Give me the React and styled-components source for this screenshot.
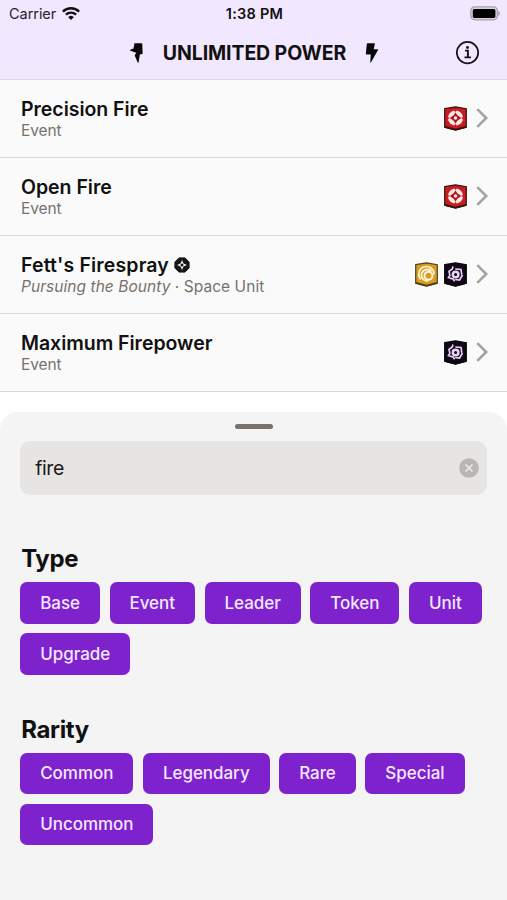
import React from 'react'
import styled, { createGlobalStyle } from 'styled-components'

const GlobalStyle = createGlobalStyle`
  * {
    box-sizing: border-box;
  }
  body {
    margin: 0;
    background: #fff;
    color: #111;
    font-family: Inter, 'Liberation Sans', sans-serif;
  }
`
const Screen = styled.div`
  display: flex;
  flex-direction: column;
  height: 900px;
  overflow: hidden;
`
const Header = styled.header`
  height: 80px;
  background: #f1e7fe;
  border-bottom: 1px solid #dcd7e0;
`
const StatusBar = styled.div`
  display: grid;
  grid-template-columns: 1fr auto 1fr;
  align-items: center;
  height: 27px;
  padding: 0 7px 0 9px;
  font-size: 14.5px;
  line-height: 27px;
`
const Carrier = styled.div`
  display: flex;
  align-items: center;
  gap: 6px;
  color: #28232d;
  letter-spacing: -0.05px;
`
const Time = styled.div`
  font-weight: 600;
  letter-spacing: 0.25px;
`
const Battery = styled.div`
  display: flex;
  justify-content: flex-end;
`
const TitleBar = styled.div`
  display: grid;
  grid-template-columns: 1fr auto 1fr;
  align-items: center;
  height: 51px;
  padding: 0 26px 0 28px;
`
const Brand = styled.div`
  grid-column: 2;
  display: flex;
  align-items: center;
  gap: 19px;
`
const Title = styled.h1`
  margin: 0;
  font-size: 19.5px;
  font-weight: 700;
  line-height: 24px;
  letter-spacing: -0.1px;
`
const InfoButton = styled.button`
  justify-self: end;
  display: flex;
  padding: 0;
  border: 0;
  background: none;
`
const CardRow = styled.div`
  display: flex;
  align-items: center;
  justify-content: space-between;
  height: 78px;
  padding: 0 18px 0 21px;
  background: #fafafa;
  border-bottom: 1px solid #d9d9d9;
`
const CardName = styled.div`
  display: flex;
  align-items: center;
  gap: 5px;
  font-size: 19.5px;
  font-weight: 600;
  line-height: 24px;
  letter-spacing: ${p => p.$spacing || 0}px;
`
const CardInfo = styled.div`
  color: #78716c;
  font-size: 15.5px;
  line-height: 20px;
  letter-spacing: ${p => p.$spacing || 0}px;
`
const Aspects = styled.div`
  display: flex;
  align-items: center;
  gap: 6px;
  padding-bottom: 1px;
`
const Sheet = styled.section`
  flex: 1;
  margin-top: 20px;
  padding: 12px 19.800px 0 20.200px;
  background: #f4f4f4;
  border-radius: 18px 18px 0 0;
`
const Handle = styled.div`
  width: 38px;
  height: 5px;
  margin: 0 auto;
  border-radius: 3px;
  background: #78716c;
`
const SearchBox = styled.div`
  display: flex;
  align-items: center;
  justify-content: space-between;
  height: 54px;
  margin-top: 12px;
  padding: 0 8px 0 15px;
  border-radius: 10px;
  background: #e7e5e4;
  color: #1c1917;
  font-size: 19.5px;
  letter-spacing: -0.4px;
`
const Filter = styled.div`
  padding-top: ${p => p.$top}px;
`
const FilterTitle = styled.h2`
  margin: 0 0 7px 1px;
  font-size: 24px;
  font-weight: 700;
  line-height: 32px;
  letter-spacing: -0.35px;
`
const Chips = styled.div`
  display: flex;
  flex-wrap: wrap;
  gap: 9.5px;
`
const Chip = styled.button`
  height: 41.5px;
  padding: 0 20px;
  border: 0;
  border-radius: 7px;
  background: #7e22ce;
  color: #f3e8ff;
  font-family: inherit;
  font-size: 17px;
  font-weight: 500;
  letter-spacing: -0.04px;
`

const WifiIcon = () => (
  <svg width='18' height='14' viewBox='0 0 18 14' fill='none' stroke='#111' strokeWidth='2.4'>
    <path d='M.9 4.600a11.600 11.600 0 0 1 16.200 0M3.900 7.700a7.300 7.300 0 0 1 10.200 0' />
    <path d='M9 13 6.200 10.200a4 4 0 0 1 5.600 0z' fill='#111' stroke='none' />
  </svg>
)
const BatteryIcon = () => (
  <svg width='30' height='15' viewBox='0 0 30 15'>
    <rect x='.8' y='.8' width='26.600' height='13' rx='4' fill='#d9d0e2' stroke='#a8a1af' strokeWidth='1.300' />
    <rect x='2.800' y='2.900' width='22.600' height='9' rx='1.600' fill='#000' />
    <path d='M28.400 5v4.800c1-.4 1.500-1.300 1.500-2.400S29.400 5.400 28.400 5z' fill='#a8a1af' />
  </svg>
)
const LeftBolt = () => (
  <svg width='14' height='20' viewBox='0 0 14 20' fill='#080808'>
    <path d='M4.500.3h7q.8 0 .8.8l.3 9.300q0 .8-.8.8h-1.900L8.600 19.400q-.4.700-.9.100L4.700 12.600l1.500-2.900-5.700-2q-.9-.5-.1-.9l3.100-1.300z' />
  </svg>
)
const RightBolt = () => (
  <svg width='14' height='20' viewBox='0 0 14 20' fill='#080808'>
    <path d='M2.700.3h6.500q.9 0 .6.900L8.700 6.200h3.800q1 0 .5.900L6.100 19.300q-.7.800-.8-.2l.4-7.700H1.600q-.9 0-.8-.9L1.800 1.200q.1-.9.900-.9z' />
  </svg>
)
const InfoIcon = () => (
  <svg width='25' height='24' viewBox='0 0 25 24' fill='none' stroke='#161219' strokeWidth='1.700'>
    <circle cx='11.500' cy='11.600' r='10.700' />
    <path d='M9 9.600h2.900v6.500M8.500 16.400H15' strokeWidth='1.900' />
    <circle cx='11.500' cy='6.500' r='1.400' fill='#161219' stroke='none' />
  </svg>
)
const Chevron = () => (
  <svg width='16' height='22' viewBox='0 0 16 22' fill='none' stroke='#a3a3a3' strokeWidth='2.600'>
    <path d='M4.300 2.200 13.200 11 4.300 19.800' />
  </svg>
)
const UniqueIcon = () => (
  <svg width='16' height='16' viewBox='0 0 16 16'>
    <path d='M5 .9h6L15.100 5v6L11 15.100H5L.9 11V5z' fill='#171717' stroke='#171717' strokeLinejoin='round' />
    <path d='M8 3 9.500 6.500 13 8 9.500 9.500 8 13 6.500 9.500 3 8l3.500-1.500z' fill='#f5f5f5' />
    <circle cx='8' cy='8' r='1.500' fill='#171717' />
  </svg>
)
const ClearIcon = () => (
  <svg width='20' height='20' viewBox='0 0 20 20'>
    <circle cx='10' cy='10' r='9.800' fill='#b8b7b6' />
    <path d='m6.500 6.500 7 7m0-7-7 7' stroke='#eceaea' strokeWidth='1.700' />
  </svg>
)

const badgeColors = {
  aggression: ['#c91d24', '#37150f'],
  cunning: ['#d99c22', '#51401c'],
  villainy: ['#12051c', '#090909']
}
const AspectIcon = ({ aspect }) => {
  const [fill, stroke] = badgeColors[aspect]
  return (
    <svg width='23' height='25' viewBox='0 0 23 25'>
      <path d='M.7 2.700 11.500.8l10.800 1.900v18.500L11.500 24.200.7 21.200z' fill={fill} stroke={stroke} strokeWidth='1.200' />
      <path d='M1 20.800 11.500 23.600 22 20.800' fill='none' stroke={stroke} strokeWidth='1.800' />
      {aspect === 'aggression' && (
        <g>
          <circle cx='11.500' cy='12' r='7.600' fill='#ffe9e5' />
          <path d='M11.500 6.300 13.100 9l4.100 3-4.100 3-1.600 2.700L9.900 15l-4.100-3 4.100-3z' fill='#b0141c' />
          <path d='M11.500 3.500v2.300M11.500 18.200v2.300M3 12h2.300M17.700 12H20' stroke='#c91d24' strokeWidth='1.300' />
          <circle cx='11.500' cy='12' r='1.800' fill='#ffe9e5' />
        </g>
      )}
      {aspect === 'cunning' && (
        <g fill='none' stroke='#fff8dc'>
          <path d='M6 17.500A7.600 7.600 0 1 1 19 12.500' strokeWidth='1.600' />
          <path d='M13 18.800A5.700 5.700 0 1 1 16.500 9.500' strokeWidth='1.700' />
          <circle cx='13.500' cy='13.700' r='4' fill='#d99c22' strokeWidth='1.900' />
        </g>
      )}
      {aspect === 'villainy' && (
        <g fill='none' stroke='#e5d5f3'>
          <path d='M9 4.500 8.300 7 5 9.300l.8 3.700M11.300 7l5.700.5.800 5.300M18.500 13 15.500 18l-4.300-.5M10.500 19.300l-1-2-5-1.800L6.200 13' strokeWidth='1.700' />
          <circle cx='11.600' cy='12.500' r='2.800' strokeWidth='2.500' />
        </g>
      )}
    </svg>
  )
}

const cards = [
  { name: 'Precision Fire', type: 'Event', aspects: ['aggression'] },
  { name: 'Open Fire', type: 'Event', aspects: ['aggression'] },
  {
    name: "Fett's Firespray",
    subtitle: 'Pursuing the Bounty',
    type: 'Space Unit',
    unique: true,
    aspects: ['cunning', 'villainy']
  },
  { name: 'Maximum Firepower', type: 'Event', aspects: ['villainy'] }
]
const types = ['Base', 'Event', 'Leader', 'Token', 'Unit', 'Upgrade']
const rarities = ['Common', 'Legendary', 'Rare', 'Special', 'Uncommon']

const Card = ({ name, subtitle, type, unique, aspects }) => (
  <CardRow>
    <div>
      <CardName $spacing={unique ? 0.15 : -0.03}>
        {name}
        {unique && <UniqueIcon />}
      </CardName>
      <CardInfo $spacing={subtitle ? 0.05 : -0.1}>
        {subtitle && <em>{subtitle}</em>}
        {subtitle && ' · '}
        {type}
      </CardInfo>
    </div>
    <Aspects>
      {aspects.map(aspect => (
        <AspectIcon key={aspect} aspect={aspect} />
      ))}
      <Chevron />
    </Aspects>
  </CardRow>
)

const App = () => (
  <Screen>
    <GlobalStyle />
    <Header>
      <StatusBar>
        <Carrier>
          Carrier
          <WifiIcon />
        </Carrier>
        <Time>1:38 PM</Time>
        <Battery>
          <BatteryIcon />
        </Battery>
      </StatusBar>
      <TitleBar>
        <Brand>
          <LeftBolt />
          <Title>UNLIMITED POWER</Title>
          <RightBolt />
        </Brand>
        <InfoButton aria-label='Info'>
          <InfoIcon />
        </InfoButton>
      </TitleBar>
    </Header>
    {cards.map(card => (
      <Card key={card.name} {...card} />
    ))}
    <Sheet>
      <Handle />
      <SearchBox>
        fire
        <ClearIcon />
      </SearchBox>
      <Filter $top={48}>
        <FilterTitle>Type</FilterTitle>
        <Chips>
          {types.map(label => (
            <Chip key={label}>{label}</Chip>
          ))}
        </Chips>
      </Filter>
      <Filter $top={39}>
        <FilterTitle>Rarity</FilterTitle>
        <Chips>
          {rarities.map(label => (
            <Chip key={label}>{label}</Chip>
          ))}
        </Chips>
      </Filter>
    </Sheet>
  </Screen>
)

export default App
